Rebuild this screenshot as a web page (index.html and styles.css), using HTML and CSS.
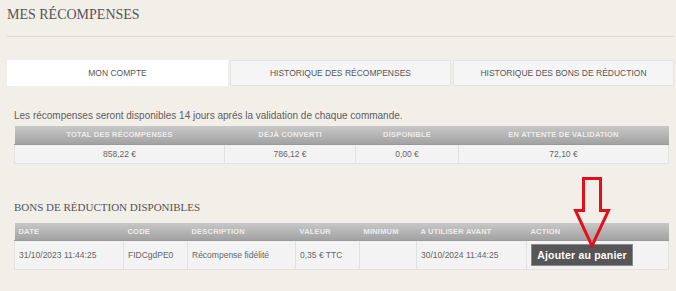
FILE: index.html
```html
<!DOCTYPE html>
<html lang="fr">
    <head>
        <meta charset="UTF-8">
        <title>Mes récompenses</title>
        <link rel="stylesheet" href="styles.css">
    </head>
    <body>
        <div class="page">
            <h1 class="page-title">Mes récompenses</h1>

            <div class="tabs">
                <div class="tab active">Mon compte</div>
                <div class="tab">Historique des récompenses</div>
                <div class="tab">Historique des bons de réduction</div>
            </div>

            <div class="content">
                <p class="intro">Les récompenses seront disponibles 14 jours aprés la validation de chaque commande.</p>

                <table class="grid summary">
                    <colgroup>
                        <col style="width:210px">
                        <col style="width:131px">
                        <col style="width:103px">
                        <col style="width:210px">
                    </colgroup>
                    <tr>
                        <th>Total des récompenses</th>
                        <th>Déjà converti</th>
                        <th>Disponible</th>
                        <th>En attente de validation</th>
                    </tr>
                    <tr>
                        <td>858,22 €</td>
                        <td>786,12 €</td>
                        <td>0,00 €</td>
                        <td>72,10 €</td>
                    </tr>
                </table>

                <h2 class="section-title">Bons de réduction disponibles</h2>

                <div class="vouchers">
                    <table class="grid list">
                        <colgroup>
                            <col style="width:109px">
                            <col style="width:64px">
                            <col style="width:108px">
                            <col style="width:64px">
                            <col style="width:57px">
                            <col style="width:110px">
                            <col style="width:142px">
                        </colgroup>
                        <tr>
                            <th>Date</th>
                            <th>Code</th>
                            <th>Description</th>
                            <th>Valeur</th>
                            <th>Minimum</th>
                            <th>A utiliser avant</th>
                            <th>Action</th>
                        </tr>
                        <tr>
                            <td>31/10/2023 11:44:25</td>
                            <td>FIDCgdPE0</td>
                            <td>Récompense fidélité</td>
                            <td>0,35 € TTC</td>
                            <td></td>
                            <td>30/10/2024 11:44:25</td>
                            <td><button class="cart-button" type="button">Ajouter au panier</button></td>
                        </tr>
                    </table>

                    <svg class="arrow" width="40" height="74" viewBox="0 0 40 74">
                        <path d="M10.5 1.5 H27.5 V33.5 H35.5 L19 69 L2.5 33.5 H10.5 Z" fill="none" stroke="#e3101c" stroke-width="3" stroke-linejoin="miter"/>
                    </svg>
                </div>
            </div>
        </div>
    </body>
</html>
```

FILE: styles.css
```css
* {
    box-sizing: border-box;
}
body {
    margin: 0;
    background-color: #f2eee8;
    font-family: "Liberation Sans", Arial, sans-serif;
    color: #666;
}
.page {
    padding: 0 2px 0 7px;
}
.page-title {
    margin: 0;
    padding-top: 6px;
    height: 37px;
    border-bottom: 1px solid #dcd8d2;
    font-family: "Liberation Serif", serif;
    font-weight: normal;
    font-size: 14px;
    line-height: 17px;
    text-transform: uppercase;
    color: #555;
}
.tabs {
    display: flex;
    gap: 2px;
    margin-top: 23px;
}
.tab {
    flex: 1;
    height: 26px;
    line-height: 25px;
    text-align: center;
    font-size: 8.5px;
    text-transform: uppercase;
    color: #555;
    background-color: #f5f5f5;
    border: 1px solid #e6e4e0;
}
.tab.active {
    background-color: #fff;
    border-color: #fff;
}
.content {
    padding: 0 6px 0 7px;
}
.intro {
    margin: 0;
    padding-top: 22px;
    font-size: 10px;
    line-height: 16px;
    color: #5e5e5e;
}
.grid {
    border-collapse: collapse;
    table-layout: fixed;
    width: 654px;
    margin-top: 2px;
}
.grid th {
    height: 18px;
    padding: 0 4px;
    background: linear-gradient(#c8c8c8, #a2a2a2);
    border-bottom: 1px solid #999;
    color: #ececec;
    font-size: 7.5px;
    font-weight: bold;
    text-transform: uppercase;
    letter-spacing: 0.2px;
}
.grid td {
    padding: 0 4px;
    background-color: #f3f3f3;
    border: 1px solid #e2e2e2;
    font-size: 8.5px;
    color: #666;
}
.summary th,
.summary td {
    text-align: center;
}
.summary td {
    height: 19px;
}
.section-title {
    margin: 0;
    padding-top: 36px;
    height: 57px;
    font-family: "Liberation Serif", serif;
    font-weight: normal;
    font-size: 11px;
    line-height: 14px;
    text-transform: uppercase;
    color: #555;
}
.vouchers {
    position: relative;
}
.list th {
    text-align: left;
}
.list td {
    height: 29px;
}
.cart-button {
    display: block;
    width: 102px;
    height: 22px;
    padding: 0;
    background-color: #565656;
    border: 1px solid #8a8a8a;
    color: #fff;
    font-family: "Liberation Sans", Arial, sans-serif;
    font-size: 10.5px;
    font-weight: bold;
    letter-spacing: 0.2px;
}
.arrow {
    position: absolute;
    left: 559px;
    top: -46px;
}
```
